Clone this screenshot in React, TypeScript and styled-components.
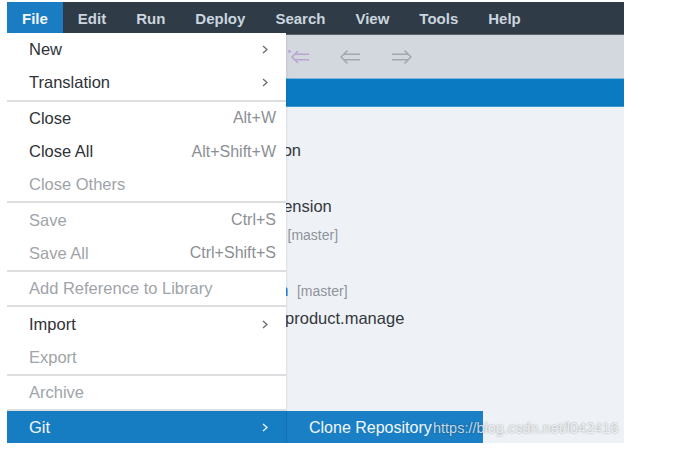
import React from "react";
import styled, { createGlobalStyle } from "styled-components";
import { FilePlus, Save, Play, Undo2, Redo2 } from "lucide-react";

const GlobalStyle = createGlobalStyle`
  html, body { margin: 0; padding: 0; background: #ffffff; }
  body { font-family: "Liberation Sans", Arial, sans-serif; }
`;

const Page = styled.div`
  padding: 2px 0 0 7px;
`;

const Window = styled.div`
  position: relative;
  width: 617px;
  height: 441px;
  overflow: hidden;
  display: flex;
  flex-direction: column;
  background: #eef2f7;
`;

const MenuBar = styled.div`
  height: 32px;
  flex: none;
  display: flex;
  align-items: stretch;
  background: #2f3b47;
  border-bottom: 1px solid #5a656f;
`;

const MenuBarItem = styled.div<{ $active?: boolean }>`
  display: flex;
  align-items: center;
  padding: 0 15px;
  font-size: 15px;
  font-weight: bold;
  color: ${(p) => (p.$active ? "#f3f7fb" : "#cbd5df")};
  background: ${(p) => (p.$active ? "#1a7cc3" : "transparent")};
`;

const Toolbar = styled.div`
  height: 43px;
  flex: none;
  display: flex;
  align-items: center;
  gap: 30px;
  padding-left: 20px;
  background: #d3d8df;
  color: #8d949b;
`;

const ToolIcon = styled.svg`
  width: 22px;
  height: 16px;
  flex: none;
`;

const BlueBar = styled.div`
  height: 27px;
  flex: none;
  background: #0a7bc2;
  border-top: 1px solid #7ab6de;
  border-bottom: 1px solid #3d98d4;
`;

const Tree = styled.div`
  flex: 1;
  padding-top: 1px;
  display: flex;
  flex-direction: column;
`;

const TreeRow = styled.div<{ $indent: number }>`
  height: 28px;
  display: flex;
  align-items: baseline;
  padding-left: ${(p) => p.$indent}px;
  line-height: 28px;
  white-space: nowrap;
`;

const TreeLabel = styled.span<{ $link?: boolean }>`
  font-size: 16.5px;
  color: ${(p) => (p.$link ? "#1a73c4" : "#34373d")};
`;

const Branch = styled.span<{ $gap: number }>`
  font-size: 14px;
  color: #8f9397;
  margin-left: ${(p) => p.$gap}px;
`;

const Dropdown = styled.div`
  position: absolute;
  top: 31px;
  left: 0;
  width: 279px;
  background: #ffffff;
  box-shadow: 1px 1px 2px rgba(0, 0, 0, 0.08);
  display: flex;
  flex-direction: column;
`;

const MenuRow = styled.div<{ $selected?: boolean }>`
  position: relative;
  height: 33.3px;
  flex: none;
  display: flex;
  align-items: center;
  padding: 0 10px 0 22px;
  font-size: 16px;
  background: ${(p) => (p.$selected ? "#177dc3" : "transparent")};
`;

const MenuLabel = styled.span<{ $disabled?: boolean; $selected?: boolean }>`
  font-size: 16.5px;
  color: ${(p) => (p.$selected ? "#f2f7fb" : p.$disabled ? "#a0a4a8" : "#2f3237")};
`;

const Shortcut = styled.span`
  margin-left: auto;
  color: #8c9094;
  font-size: 16px;
`;

const Chevron = styled.svg<{ $light?: boolean }>`
  margin-left: auto;
  margin-right: 8px;
  width: 6px;
  height: 9px;
  color: ${(p) => (p.$light ? "#eaf3fa" : "#6d6f73")};
`;

const Separator = styled.div`
  height: 2px;
  flex: none;
  background: #dcdee0;
`;

const SubMenu = styled.div`
  position: absolute;
  top: 0;
  left: 100%;
  width: 197px;
  height: 33.3px;
  display: flex;
  align-items: center;
  padding-left: 22px;
  box-sizing: border-box;
  background: #1a7fc5;
  border-left: 1px solid #136fb0;
  color: #f2f7fb;
  font-size: 16px;
`;

const Watermark = styled.div`
  position: absolute;
  left: 426px;
  top: 418px;
  font-size: 14.5px;
  line-height: 17px;
  color: rgba(255, 255, 255, 0.75);
  text-shadow: 0 0 2px rgba(0, 0, 0, 0.4);
  pointer-events: none;
  white-space: nowrap;
`;

const ChevronIcon = ({ light }: { light?: boolean }) => (
  <Chevron $light={light} viewBox="0 0 6 9">
    <path d="M1 1 L5 4.5 L1 8" fill="none" stroke="currentColor" strokeWidth="1.4" />
  </Chevron>
);

const BackIcon = ({ color }: { color: string }) => (
  <ToolIcon viewBox="0 0 22 16">
    <path d="M8.5 1.5 L2 8 L8.5 14.5 M5.5 5.2 H21 M5.5 10.8 H21" fill="none" stroke={color} strokeWidth="1.5" />
  </ToolIcon>
);

const ForwardIcon = ({ color }: { color: string }) => (
  <ToolIcon viewBox="0 0 22 16">
    <path d="M13.5 1.5 L20 8 L13.5 14.5 M16.5 5.2 H1 M16.5 10.8 H1" fill="none" stroke={color} strokeWidth="1.5" />
  </ToolIcon>
);

const FirstIcon = ({ color }: { color: string }) => (
  <ToolIcon viewBox="0 0 22 16">
    <circle cx="2.5" cy="2.5" r="1.4" fill={color} />
    <path d="M11 2 L5 8 L11 14 M8.5 5.3 H22 M8.5 10.7 H22" fill="none" stroke={color} strokeWidth="1.5" />
  </ToolIcon>
);

type Item =
  | { kind: "sep" }
  | { kind: "item"; label: string; shortcut?: string; sub?: boolean; disabled?: boolean; selected?: boolean };

const menu: Item[] = [
  { kind: "item", label: "New", sub: true },
  { kind: "item", label: "Translation", sub: true },
  { kind: "sep" },
  { kind: "item", label: "Close", shortcut: "Alt+W" },
  { kind: "item", label: "Close All", shortcut: "Alt+Shift+W" },
  { kind: "item", label: "Close Others", disabled: true },
  { kind: "sep" },
  { kind: "item", label: "Save", shortcut: "Ctrl+S", disabled: true },
  { kind: "item", label: "Save All", shortcut: "Ctrl+Shift+S", disabled: true },
  { kind: "sep" },
  { kind: "item", label: "Add Reference to Library", disabled: true },
  { kind: "sep" },
  { kind: "item", label: "Import", sub: true },
  { kind: "item", label: "Export", disabled: true },
  { kind: "sep" },
  { kind: "item", label: "Archive", disabled: true },
  { kind: "sep" },
  { kind: "item", label: "Git", sub: true, selected: true },
];

type Row = { label?: string; indent: number; link?: boolean; branch?: string; gap?: number };

const treeRows: Row[] = [
  { indent: 16 },
  { label: "Application", indent: 213.3 },
  { indent: 40 },
  { label: "Extension", indent: 252.3 },
  { label: "extension", indent: 205.4, branch: "[master]", gap: 4.5 },
  { indent: 40 },
  { label: "application", indent: 202.6, link: true, branch: "[master]", gap: 8.5 },
  { label: "sap.product.manage", indent: 246.9 },
];

const menuBar = ["File", "Edit", "Run", "Deploy", "Search", "View", "Tools", "Help"];

export default function App() {
  return (
    <Page>
      <GlobalStyle />
      <Window>
        <MenuBar>
          {menuBar.map((m) => (
            <MenuBarItem key={m} $active={m === "File"}>
              {m}
            </MenuBarItem>
          ))}
        </MenuBar>
        <Toolbar>
          <FilePlus size={22} strokeWidth={1.5} />
          <Save size={22} strokeWidth={1.5} />
          <Play size={22} strokeWidth={1.5} />
          <Undo2 size={22} strokeWidth={1.5} />
          <Redo2 size={22} strokeWidth={1.5} />
          <FirstIcon color="#b9a3d3" />
          <BackIcon color="#a2a7ad" />
          <ForwardIcon color="#a2a7ad" />
        </Toolbar>
        <BlueBar />
        <Tree>
          {treeRows.map((r, i) => (
            <TreeRow key={i} $indent={r.indent}>
              {r.label && <TreeLabel $link={r.link}>{r.label}</TreeLabel>}
              {r.branch && <Branch $gap={r.gap ?? 4}>{r.branch}</Branch>}
            </TreeRow>
          ))}
        </Tree>
        <Dropdown>
          {menu.map((it, i) =>
            it.kind === "sep" ? (
              <Separator key={i} />
            ) : (
              <MenuRow key={i} $selected={it.selected}>
                <MenuLabel $disabled={it.disabled} $selected={it.selected}>
                  {it.label}
                </MenuLabel>
                {it.shortcut && <Shortcut>{it.shortcut}</Shortcut>}
                {it.sub && <ChevronIcon light={it.selected} />}
                {it.selected && <SubMenu>Clone Repository</SubMenu>}
              </MenuRow>
            )
          )}
        </Dropdown>
        <Watermark>https://blog.csdn.net/l042416</Watermark>
      </Window>
    </Page>
  );
}
